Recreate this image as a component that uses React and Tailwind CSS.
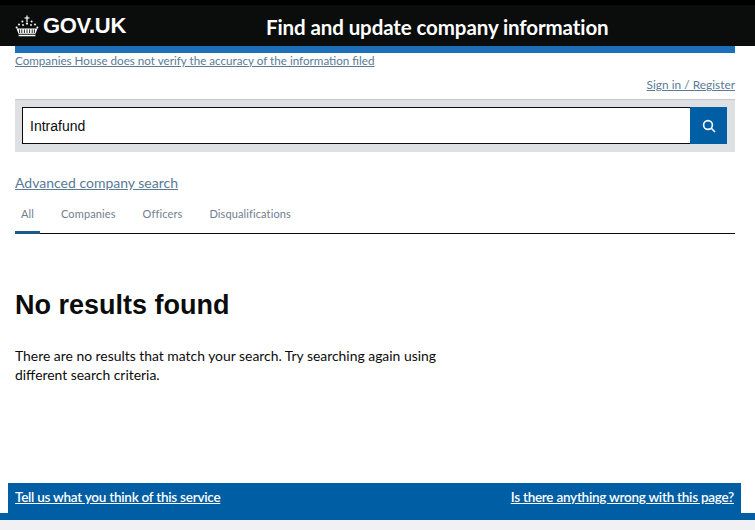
import React from "react";

function Crown() {
  return (
    <svg width="24" height="22" viewBox="0 0 24 22" fill="#fff" aria-hidden="true">
      <rect x="11.4" y="0.5" width="1.2" height="6.5" />
      <rect x="9.6" y="2.4" width="4.8" height="1.2" />
      <circle cx="7.4" cy="6.4" r="1" />
      <circle cx="16.6" cy="6.4" r="1" />
      <circle cx="12" cy="8.6" r="1.1" />
      <circle cx="4" cy="9.4" r="1" />
      <circle cx="20" cy="9.4" r="1" />
      <circle cx="1.6" cy="12.4" r="1" />
      <circle cx="22.4" cy="12.4" r="1" />
      <circle cx="8" cy="10" r="0.9" />
      <circle cx="16" cy="10" r="0.9" />
      <path d="M1.5 13.6h21l-2 5.2h-17z M3.6 19.7h16.8v1.5H3.6z" />
      <path d="M4.6 14.4v3.6M6.8 14.4v3.6M9.4 14.4v3.6M12 14.4v3.6M14.6 14.4v3.6M17.2 14.4v3.6M19.4 14.4v3.6" stroke="#0b0c0c" strokeWidth="0.9" fill="none" />
    </svg>
  );
}

export default function App() {
  return (
    <div className="w-[755px] h-[530px] overflow-hidden bg-white flex flex-col font-['Lato','Liberation_Sans',sans-serif]">
      <header className="h-[46px] bg-[#0b0c0c] border-t-[5px] border-black flex items-center pl-[15px] text-white shrink-0">
        <div className="flex items-center gap-[4px] w-[251px]">
          <Crown />
          <span className="font-['Liberation_Sans',sans-serif] font-bold text-[22px] leading-none tracking-[-0.3px]">GOV.UK</span>
        </div>
        <span className="text-[20.5px] font-bold leading-none mt-[3px] tracking-[-0.1px]">Find and update company information</span>
      </header>

      <div className="ml-[15px] mr-[20px] flex flex-col flex-1">
        <div className="h-[7px] bg-[#1d70b8]" />
        <a className="text-[11.65px] leading-[16px] text-[#5a7a96] underline">Companies House does not verify the accuracy of the information filed</a>

        <div className="flex justify-end mt-[8px]">
          <a className="text-[11.9px] leading-[16px] text-[#5a7a96] underline">Sign in / Register</a>
        </div>

        <div className="mt-[6px] h-[53px] bg-[#dee0e4] border-t border-[#c8c8c8] pl-[7px] pr-[8px] pt-[7px]">
          <div className="flex h-[37px]">
            <div className="flex-1 bg-white border-[1.5px] border-r-0 border-[#0b0c0c] pl-[7px] pt-[1px] flex items-center font-['Liberation_Sans',sans-serif] text-[14px] text-[#0b0c0c]">Intrafund</div>
            <div className="w-[37px] bg-[#005ea5] flex items-center justify-center">
              <svg width="14" height="14" viewBox="0 0 14 14" fill="none" stroke="#fff" strokeWidth="1.6" aria-hidden="true">
                <circle cx="6" cy="6" r="4.4" />
                <path d="M9.3 9.3L13 13" />
              </svg>
            </div>
          </div>
        </div>

        <a className="mt-[22px] text-[14px] leading-[18px] text-[#5a7a96] underline">Advanced company search</a>

        <nav className="mt-[13px] h-[29px] border-b border-[#0b0c0c] flex text-[11px] leading-[16px] text-[#6f7e8f] tracking-[0.12px]">
          <div className="w-[25px] h-[29px] border-b-[3px] border-[#1d5a8a] pl-[6px] pt-[1px] shrink-0">All</div>
          <div className="ml-[21px] pt-[1px]">Companies</div>
          <div className="ml-[27px] pt-[1px]">Officers</div>
          <div className="ml-[27px] pt-[1px]">Disqualifications</div>
        </nav>

        <h1 className="mt-[55px] font-['Liberation_Sans',sans-serif] text-[27px] leading-[32px] font-bold text-[#0b0c0c]">No results found</h1>
        <p className="mt-[25px] w-[440px] text-[13.9px] leading-[19px] text-[#0b0c0c]">There are no results that match your search. Try searching again using different search criteria.</p>
      </div>

      <footer className="shrink-0">
        <div className="ml-[8px] mr-[14px] h-[30px] bg-[#005ea5] flex items-center justify-between px-[7px] pb-[2px] text-[13.5px] font-semibold text-white tracking-[-0.25px]">
          <a className="underline">Tell us what you think of this service</a>
          <a className="underline">Is there anything wrong with this page?</a>
        </div>
        <div className="h-[7px] bg-[#005ea5]" />
        <div className="h-[10px] bg-[#f1f1f3]" />
      </footer>
    </div>
  );
}
